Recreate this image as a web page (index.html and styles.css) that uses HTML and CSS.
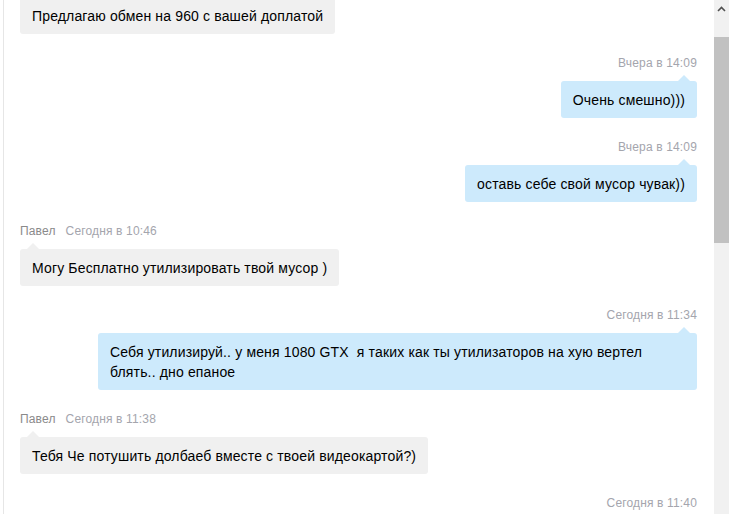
FILE: index.html
```html
<!DOCTYPE html>
<html lang="ru">
<head>
<meta charset="utf-8">
<title>Диалог</title>
<link rel="stylesheet" href="styles.css">
</head>
<body>
<div class="window">
  <div class="chat">
    <div class="messages">
      <div class="msg in first">
        <div class="bubble no-tail">Предлагаю обмен на 960 с вашей доплатой</div>
      </div>
      <div class="msg out">
        <div class="meta">Вчера в 14:09</div>
        <div class="bubble">Очень смешно)))</div>
      </div>
      <div class="msg out">
        <div class="meta">Вчера в 14:09</div>
        <div class="bubble">оставь себе свой мусор чувак))</div>
      </div>
      <div class="msg in">
        <div class="meta"><span class="name">Павел</span>Сегодня в 10:46</div>
        <div class="bubble">Могу Бесплатно утилизировать твой мусор )</div>
      </div>
      <div class="msg out">
        <div class="meta">Сегодня в 11:34</div>
        <div class="bubble wide">Себя утилизируй.. у меня 1080 GTX &nbsp;я таких как ты утилизаторов на хую вертел блять.. дно епаное</div>
      </div>
      <div class="msg in">
        <div class="meta"><span class="name">Павел</span>Сегодня в 11:38</div>
        <div class="bubble">Тебя Че потушить долбаеб вместе с твоей видеокартой?)</div>
      </div>
      <div class="msg out">
        <div class="meta">Сегодня в 11:40</div>
      </div>
    </div>
  </div>
  <div class="scrollbar">
    <div class="arrow">
      <svg width="9" height="6" viewBox="0 0 9 6"><path d="M1 5 L4.5 1.5 L8 5" fill="none" stroke="#505050" stroke-width="1.6"/></svg>
    </div>
    <div class="thumb"></div>
  </div>
</div>
</body>
</html>
```
FILE: styles.css
```css
html, body {
  margin: 0;
  padding: 0;
  background: #fff;
}
body {
  font-family: Arial, "Liberation Sans", sans-serif;
  color: #000;
}
.window {
  display: flex;
  height: 514px;
  overflow: hidden;
}
.chat {
  flex: 1;
  margin-left: 3px;
  border-left: 1px solid #e6e6e6;
  padding: 0 17px 0 16px;
  overflow: hidden;
}
.messages {
  margin-top: -3px;
}
.msg {
  display: flex;
  flex-direction: column;
  margin-bottom: 22px;
}
.msg.in { align-items: flex-start; }
.msg.out { align-items: flex-end; }
.meta {
  font-size: 12px;
  line-height: 14px;
  letter-spacing: 0.15px;
  color: #a4a5ad;
  margin-bottom: 11px;
}
.name {
  color: #8a8a8a;
  margin-right: 10px;
}
.bubble {
  position: relative;
  font-size: 14px;
  line-height: 20px;
  letter-spacing: 0.15px;
  padding: 9px 12px 8px;
  border-radius: 3px;
}
.msg.in .bubble { background: #f0f0f0; }
.msg.out .bubble { background: #cdeafc; }
.bubble::before {
  content: "";
  position: absolute;
  top: -6px;
  border-left: 6px solid transparent;
  border-right: 6px solid transparent;
  border-bottom: 6px solid transparent;
}
.msg.in .bubble::before {
  left: 7px;
  border-bottom-color: #f0f0f0;
}
.msg.out .bubble::before {
  right: 7px;
  border-bottom-color: #cdeafc;
}
.bubble.no-tail::before { display: none; }
.bubble.wide { max-width: 575px; }
.scrollbar {
  width: 15px;
  background: #f1f1f1;
  display: flex;
  flex-direction: column;
}
.arrow {
  height: 17px;
  display: flex;
  align-items: center;
  justify-content: center;
}
.thumb {
  margin-top: 20px;
  height: 206px;
  background: #c1c1c1;
}
```
